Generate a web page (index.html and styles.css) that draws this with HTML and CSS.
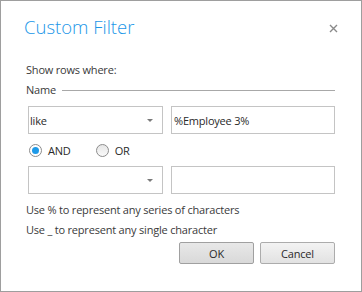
FILE: index.html
```html
<!DOCTYPE html>
<html>
<head>
<meta charset="utf-8">
<link rel="stylesheet" href="styles.css">
</head>
<body>
<div class="dialog">
  <div class="header">
    <div class="title">Custom Filter</div>
    <div class="close">
      <svg width="9" height="9" viewBox="0 0 9 9"><path d="M1 1L8 8M8 1L1 8" stroke="#8a8a8a" stroke-width="1.4"/></svg>
    </div>
  </div>
  <div class="body">
    <div class="label show">Show rows where:</div>
    <div class="group">
      <span class="label">Name</span>
      <span class="rule"></span>
    </div>
    <div class="row">
      <div class="select"><span class="val">like</span><span class="arrow"></span></div>
      <div class="input">%Employee 3%</div>
    </div>
    <div class="radios">
      <label class="radio"><span class="dot checked"></span>AND</label>
      <label class="radio"><span class="dot"></span>OR</label>
    </div>
    <div class="row">
      <div class="select"><span class="val"></span><span class="arrow"></span></div>
      <div class="input"></div>
    </div>
    <div class="label hint1">Use % to represent any series of characters</div>
    <div class="label hint2">Use _ to represent any single character</div>
    <div class="buttons">
      <div class="btn ok">OK</div>
      <div class="btn">Cancel</div>
    </div>
  </div>
</div>
</body>
</html>
```
FILE: styles.css
```css
html, body {
  margin: 0;
  padding: 0;
  background: #fff;
}
.dialog {
  box-sizing: border-box;
  width: 362px;
  height: 292px;
  border: 1px solid #9e9e9e;
  font-family: "Open Sans", "Noto Sans", sans-serif;
  font-size: 11px;
  letter-spacing: -0.2px;
  color: #3a3a3a;
}
.header {
  display: flex;
  justify-content: space-between;
  align-items: center;
  padding: 12px 23px 0 23px;
  height: 28px;
}
.title {
  font-size: 18.5px;
  font-weight: 300;
  letter-spacing: 0;
  color: #1a96e8;
  line-height: 28px;
}
.close {
  display: flex;
  padding-top: 2px;
}
.body {
  padding: 0 26px 0 25px;
}
.label {
  line-height: 16px;
}
.show {
  margin-top: 21px;
}
.group {
  display: flex;
  align-items: center;
  margin-top: 4px;
}
.rule {
  flex: 1;
  height: 1px;
  background: #a8a8a8;
  margin-left: 6px;
}
.row {
  display: flex;
  gap: 8px;
  margin-top: 8px;
  padding-left: 2px;
}
.select, .input {
  box-sizing: border-box;
  height: 28px;
  border: 1px solid #c4c4c4;
  background: #fff;
  display: flex;
  align-items: center;
  color: #2a2a2a;
}
.select {
  width: 135px;
  padding-left: 1px;
  justify-content: space-between;
}
.input {
  width: 164px;
  padding-left: 2px;
}
.arrow {
  width: 0;
  height: 0;
  border-left: 3.5px solid transparent;
  border-right: 3.5px solid transparent;
  border-top: 3.5px solid #7a7a7a;
  margin-right: 9px;
}
.radios {
  display: flex;
  gap: 25px;
  margin-top: 8px;
  margin-left: 3px;
  height: 16px;
  align-items: center;
}
.radio {
  display: flex;
  align-items: center;
  gap: 6px;
  color: #2a2a2a;
}
.dot {
  box-sizing: border-box;
  width: 13px;
  height: 13px;
  border-radius: 50%;
  border: 1px solid #8c8c8c;
  background: linear-gradient(#e6e6e6, #fafafa);
  display: flex;
  align-items: center;
  justify-content: center;
}
.dot.checked {
  background: #fff;
}
.dot.checked::after {
  content: "";
  width: 7px;
  height: 7px;
  border-radius: 50%;
  background: #1e9ae8;
}
.radios + .row {
  margin-top: 8px;
}
.hint1 {
  margin-top: 8px;
}
.hint2 {
  margin-top: 4px;
}
.buttons {
  display: flex;
  justify-content: flex-end;
  gap: 6px;
  margin-top: 4px;
}
.btn {
  box-sizing: border-box;
  width: 75px;
  height: 22px;
  border: 1px solid #acacac;
  border-radius: 2px;
  background: linear-gradient(#f3f3f3, #e2e2e2);
  display: flex;
  align-items: center;
  justify-content: center;
  color: #2a2a2a;
}
.btn.ok {
  background: linear-gradient(#e8e8e8, #d9d9d9);
  border-color: #a0a0a0;
}
```
